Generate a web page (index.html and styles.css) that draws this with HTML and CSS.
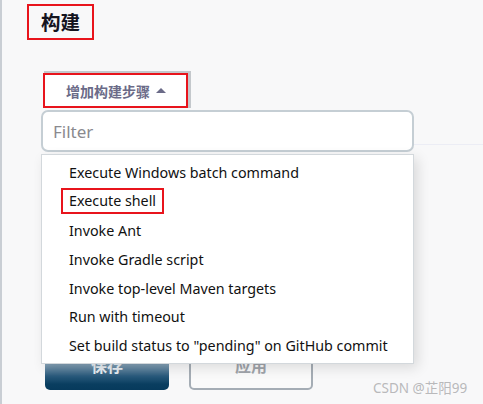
FILE: index.html
```html
<!DOCTYPE html>
<html>
<head>
<meta charset="utf-8">
<link rel="stylesheet" href="styles.css">
</head>
<body>
<div class="page">
  <div class="title-box"><h2 class="title">构建</h2></div>
  <div class="builder">
    <button class="add-btn">增加构建步骤 <span class="caret"></span></button>
    <div class="filter-row">
      <div class="filter">Filter</div>
      <div class="rule"></div>
    </div>
    <ul class="menu">
      <li>Execute Windows batch command</li>
      <li><span class="mark">Execute shell</span></li>
      <li>Invoke Ant</li>
      <li>Invoke Gradle script</li>
      <li>Invoke top-level Maven targets</li>
      <li>Run with timeout</li>
      <li>Set build status to "pending" on GitHub commit</li>
    </ul>
  </div>
  <div class="actions">
    <button class="save">保存</button>
    <button class="apply">应用</button>
  </div>
</div>
<div class="watermark">CSDN @芷阳99</div>
</body>
</html>
```
FILE: styles.css
```css
html, body {
  margin: 0;
  padding: 0;
  height: 100%;
}
body {
  background: #f8f8f9;
  font-family: "Noto Sans", "Noto Sans CJK SC", sans-serif;
  position: relative;
  overflow: hidden;
}
.page {
  border-left: 2px solid #c9ced4;
  height: 404px;
  box-sizing: border-box;
  padding-top: 4px;
}
.title-box {
  margin-left: 25px;
  height: 32px;
  border: 2px solid #e8141c;
  display: flex;
  align-items: center;
  padding-left: 12px;
  box-sizing: content-box;
  width: 51px;
}
.title {
  margin: 0;
  font-family: "Noto Sans CJK SC", sans-serif;
  font-size: 19.5px;
  font-weight: 700;
  color: #14141f;
  line-height: 1;
}
.builder {
  position: relative;
  margin-left: 39px;
  margin-top: 33px;
  width: 373px;
}
.add-btn {
  margin-left: 2px;
  width: 145px;
  height: 35px;
  border: 2px solid #e8141c;
  background: #ffffff;
  box-shadow: 2px -1px 0 1px #c4c8cc;
  display: flex;
  align-items: center;
  padding: 0 0 0 21px;
  font-family: "Noto Sans CJK SC", sans-serif;
  font-size: 14px;
  font-weight: 700;
  color: #6b6b88;
  gap: 2px;
}
.caret {
  width: 0;
  height: 0;
  border-left: 5px solid transparent;
  border-right: 5px solid transparent;
  border-bottom: 5px solid #6b6b88;
  margin-left: 4px;
}
.filter-row {
  position: relative;
  margin-top: 2px;
}
.filter {
  height: 42px;
  box-sizing: border-box;
  border: 2px solid #c5ced4;
  border-radius: 7px;
  background: #ffffff;
  display: flex;
  align-items: center;
  padding-left: 10px;
  font-size: 17px;
  color: #8a8a8f;
}
.rule {
  position: absolute;
  left: 373px;
  top: 34px;
  width: 80px;
  height: 1px;
  background: #ecedf5;
}
.menu {
  position: absolute;
  left: 0;
  top: 81px;
  width: 373px;
  box-sizing: border-box;
  margin: 0;
  padding: 3px 0 0;
  list-style: none;
  background: #ffffff;
  border: 1px solid #d3d8dc;
  box-shadow: 4px 4px 12px rgba(0, 0, 0, 0.12);
  height: 210px;
  z-index: 2;
}
.menu li {
  height: 28.9px;
  display: flex;
  align-items: center;
  padding-left: 27px;
  font-size: 14.3px;
  color: #111111;
  white-space: nowrap;
}
.mark {
  outline: 2px solid #e8141c;
  padding: 1px 6px 2px 6px;
  margin-left: -6px;
}
.actions {
  display: flex;
  gap: 20px;
  margin-left: 43px;
  margin-top: 188px;
}
.actions button {
  width: 124px;
  height: 50px;
  border-radius: 5px;
  font-family: "Noto Sans CJK SC", sans-serif;
  font-size: 16px;
  font-weight: 700;
}
.save {
  border: none;
  background: linear-gradient(#a9bccb, #7e9cb2 50%, #2a5a7c 72%, #0a3e60 88%, #073a5c);
  color: #e8eef3;
}
.apply {
  border: 2px solid #a5adb5;
  background: #fafafa;
  color: #a0a4aa;
}
.watermark {
  position: absolute;
  left: 373px;
  top: 377px;
  font-family: "Noto Sans", "Noto Sans CJK SC", sans-serif;
  font-size: 13.5px;
  color: #b9b9bb;
}
```
